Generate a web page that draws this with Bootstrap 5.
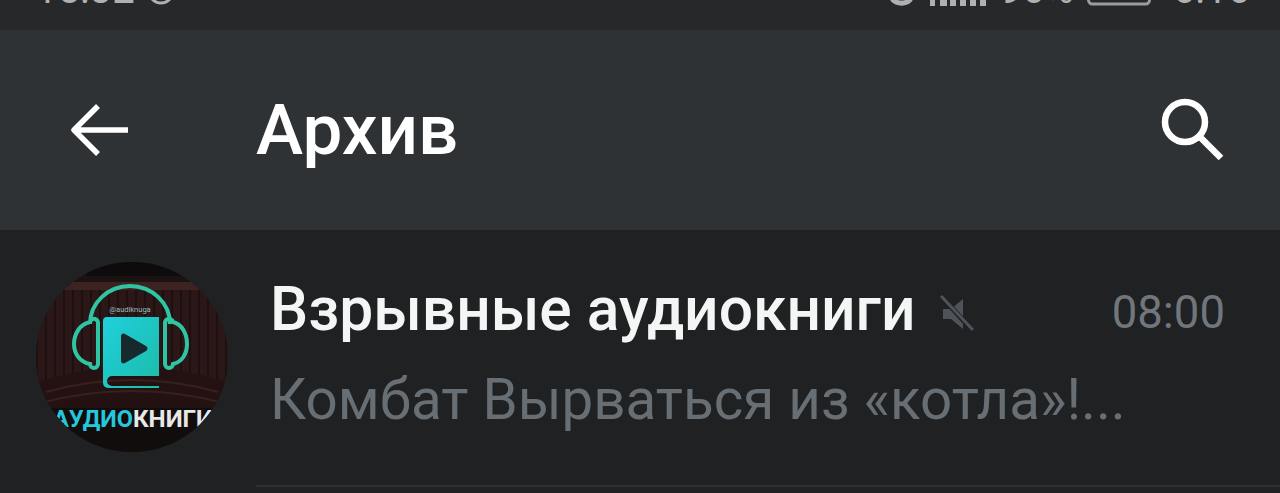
<!DOCTYPE html>
<html lang="ru"><head><meta charset="utf-8"><title>Архив</title>
<link href="https://cdn.jsdelivr.net/npm/bootstrap@5.3.0/dist/css/bootstrap.min.css" rel="stylesheet">
<style>
html,body{height:493px;overflow:hidden;background:#1f2123;font-family:Roboto,"Liberation Sans",sans-serif}
.stat-bar{height:30px;background:#26282a;color:#aeb0b1;overflow:hidden;padding:0 30px 0 35px}
.stat-row{margin-top:-30px;height:40px;font-size:40px;line-height:40px}
.stat-ic{flex:none}
.clock-ic{margin-left:12px}
.batt-ic{margin:0 22px 0 13px}
.top-head{height:200px;background:#2e3235;color:#fff}
.back-slot{width:256px;padding-left:70px}
.head-title{font-size:71px;font-weight:500;line-height:1;margin-top:-2px}
.search-slot{padding-right:55px}
.chat-row{height:255px;background:#1f2123}
.ava-slot{width:270px;padding:32px 0 0 36px}
.chat-body{padding:44px 55px 0 0}
.chat-name{font-size:60.5px;font-weight:500;color:#f4f5f5;line-height:72px;white-space:nowrap}
.chat-time{font-size:45.5px;color:#6f767c;line-height:72px;position:relative;top:3px}
.chat-prev{font-size:56.5px;color:#676e74;line-height:72px;margin-top:18px;white-space:nowrap}
.mute-ic{margin:8px 0 0 24px}
.row-line{position:absolute;left:256px;right:0;top:485px;height:2px;background:#2d3033}
</style></head><body>
<div class="stat-bar"><div class="stat-row d-flex align-items-start">
<span>15:32</span>
<svg class="stat-ic clock-ic" width="28" height="40" viewBox="0 0 28 40"><circle cx="14" cy="21" r="12" fill="none" stroke="#aeb0b1" stroke-width="3"/></svg>
<div class="ms-auto d-flex align-items-start">
<svg class="stat-ic" width="110" height="40" viewBox="0 0 110 40"><path d="M2 29c6 6 18 6 20-4" fill="none" stroke="#aeb0b1" stroke-width="5"/><path d="M40 36V26h5v10zM50 36V26h7v10zM60 36V26h6v10zM70 36V26h6v10zM80 36V26h6v10zM90 36V26h6v10z" fill="#aeb0b1"/></svg>
<span>96%</span>
<svg class="stat-ic batt-ic" width="64" height="40" viewBox="0 0 64 40"><rect x="1.5" y="-4" width="61" height="38" rx="4" fill="none" stroke="#9a9c9d" stroke-width="3"/></svg>
<span>6:16</span>
</div></div></div>
<header class="top-head d-flex align-items-center">
<div class="back-slot"><svg class="d-block" width="60" height="56" viewBox="0 0 60 56"><path d="M4 28H58M28 4 4 28l24 24" fill="none" stroke="#fff" stroke-width="5.5" stroke-linejoin="round"/></svg></div>
<div class="head-title flex-grow-1">Архив</div>
<div class="search-slot"><svg class="d-block" width="64" height="64" viewBox="0 0 64 64"><circle cx="24" cy="24" r="20" fill="none" stroke="#fff" stroke-width="6.5"/><path d="M39 39 60 60" stroke="#fff" stroke-width="6.5"/></svg></div>
</header>
<section class="chat-row d-flex">
<div class="ava-slot flex-shrink-0">
<svg class="d-block" width="192" height="190" viewBox="0 0 192 190">
<defs><clipPath id="cc"><ellipse cx="96" cy="95" rx="96" ry="95"/></clipPath><linearGradient id="bk" x1="0" y1="0" x2="1" y2="1"><stop offset="0" stop-color="#1fd0dc"/><stop offset="1" stop-color="#1dbba8"/></linearGradient>
<pattern id="wd" width="9" height="10" patternUnits="userSpaceOnUse"><rect width="9" height="10" fill="#2c1718"/><rect width="2" height="10" fill="#1d1011"/></pattern></defs>
<g clip-path="url(#cc)">
<rect width="192" height="190" fill="#1b1212"/>
<rect y="22" width="192" height="98" fill="url(#wd)"/>
<rect y="20" width="192" height="8" fill="#3c2322"/>
<path d="M0 120q96 -30 192 0v25H0z" fill="#241213"/>
<path d="M10 130q86 -24 172 0M0 142q96 -26 192 0" fill="none" stroke="#38201f" stroke-width="2"/>
<path d="M50 0h95v14H50z" fill="#0d0b0b"/>
<path d="M0 146h192v44H0z" fill="#110d0d"/>
<path d="M54 62a40 38 0 0 1 80 0" fill="none" stroke="#2fc4a2" stroke-width="4"/>
<path d="M62 62v40a4 4 0 0 1-8 0c-10-2-16-10-16-20s6-20 16-22a4 4 0 0 1 8 2z" fill="none" stroke="#2fc4a2" stroke-width="4"/>
<path d="M129 62v40a4 4 0 0 0 8 0c9-2 14-10 14-20s-5-20-14-22a4 4 0 0 0-8 2z" fill="none" stroke="#2fc4a2" stroke-width="4"/>
<path d="M67 59a4 4 0 0 1 4-4h52v59H76a5 5 0 0 0 0 10h47v2H72a5 5 0 0 1-5-5z" fill="url(#bk)"/>
<path d="M85 74c0-2 2-3 4-2l21 12c2 1 2 4 0 5L89 101c-2 1-4 0-4-2z" fill="#16292c"/>
<text x="94" y="50" text-anchor="middle" font-size="7.5" fill="#9fbcba" font-family="Roboto,sans-serif">@audiknuga</text>
<text x="17" y="165" font-size="24" font-weight="700" fill="#26c6dc" font-family="Roboto,sans-serif" textLength="80" lengthAdjust="spacingAndGlyphs">АУДИО</text>
<text x="97" y="165" font-size="24" font-weight="700" fill="#e8e8e8" font-family="Roboto,sans-serif" textLength="80" lengthAdjust="spacingAndGlyphs">КНИГИ</text>
</g></svg>
</div>
<div class="chat-body flex-grow-1">
<div class="d-flex align-items-center">
<span class="chat-name">Взрывные аудиокниги</span>
<svg class="mute-ic" width="36" height="38" viewBox="0 0 36 38"><path d="M4 14h8L24 4v30L12 24H4z" fill="#4d5359"/><path d="M3 2l30 33" stroke="#1f2123" stroke-width="5"/><path d="M2 1l32 34" stroke="#4d5359" stroke-width="3"/></svg>
<span class="chat-time ms-auto">08:00</span>
</div>
<div class="chat-prev">Комбат Вырваться из «котла»!...</div>
</div>
</section>
<div class="row-line"></div>
</body></html>
